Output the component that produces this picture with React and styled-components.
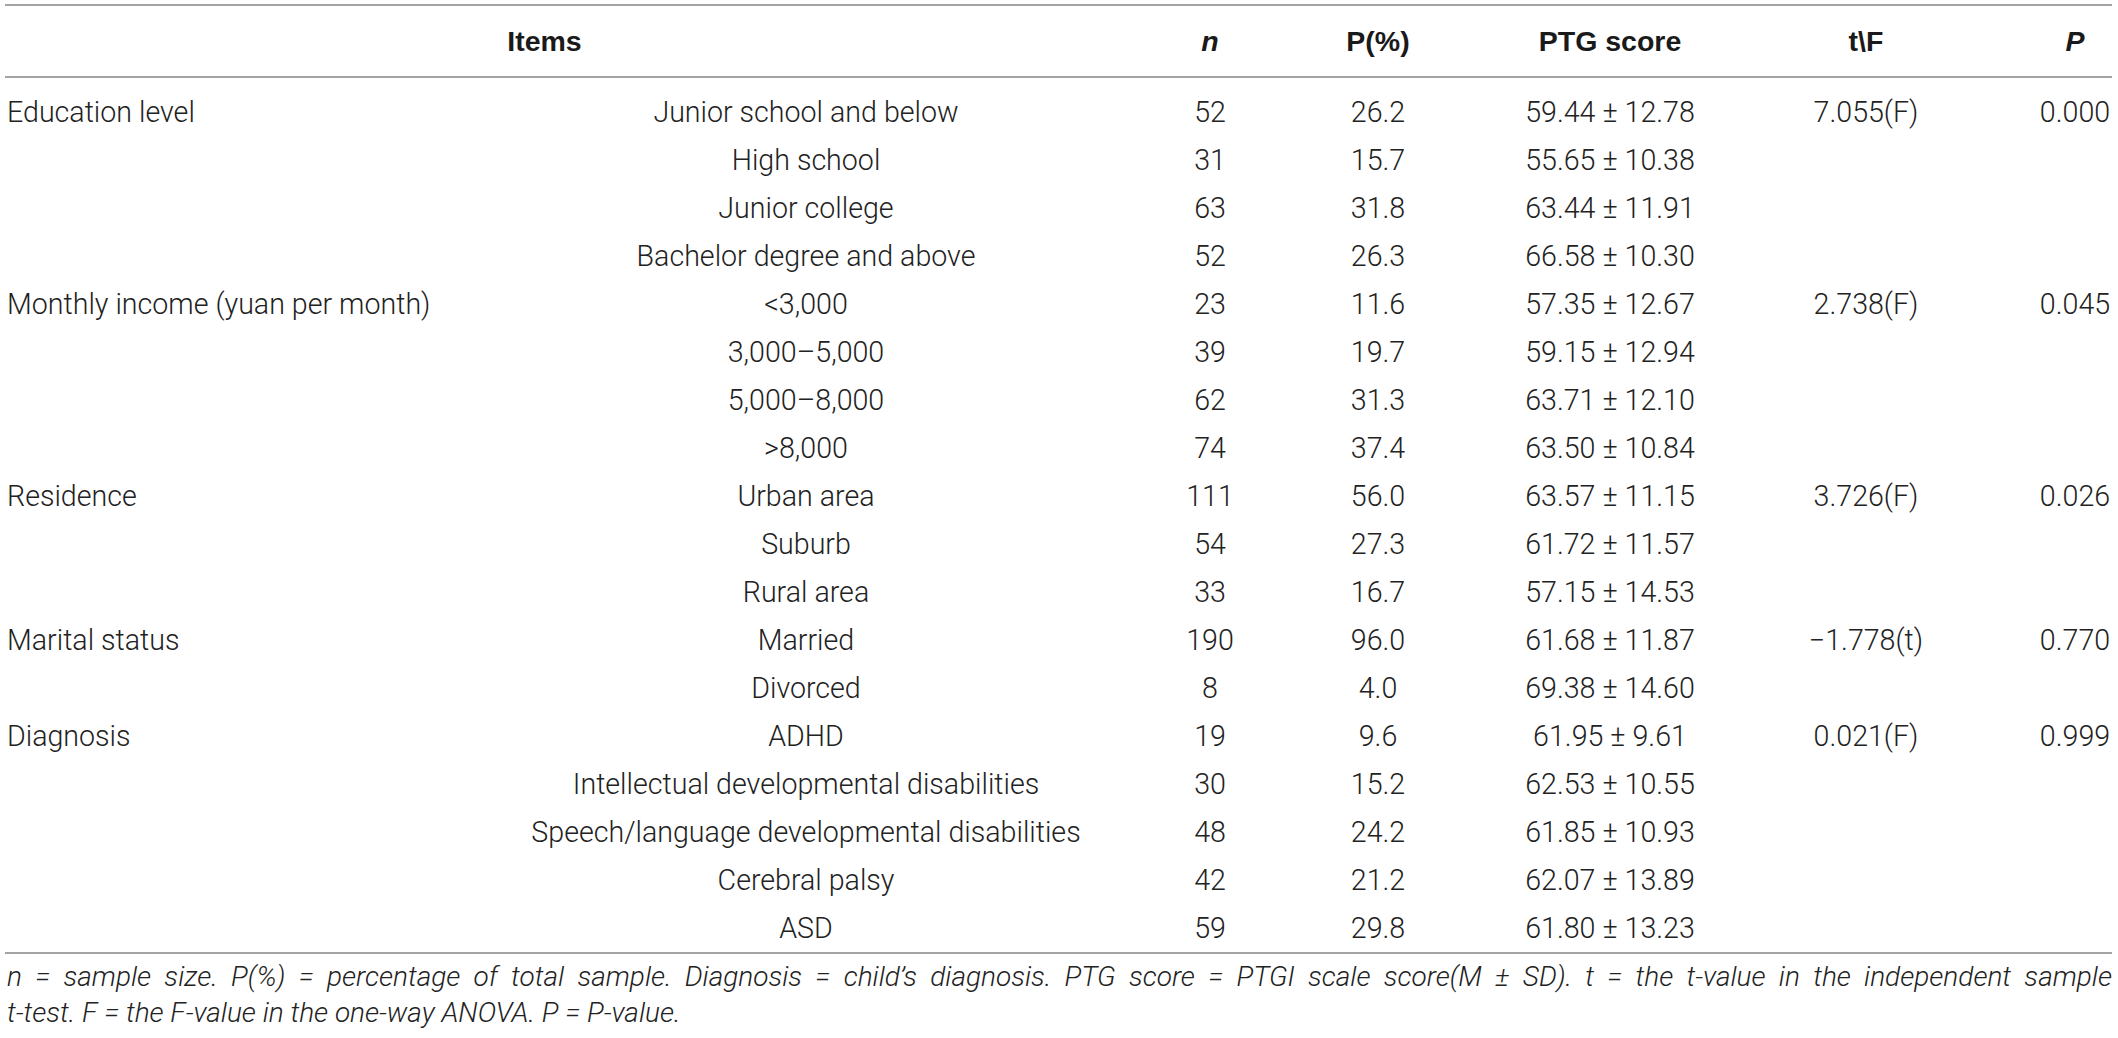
import styled, { createGlobalStyle } from "styled-components";

const GlobalStyle = createGlobalStyle`
  html, body {
    margin: 0;
    padding: 0;
    background: #fff;
  }
  body {
    font-family: Roboto, "Liberation Sans", sans-serif;
    color: #222;
  }
`;

const groups = [
  {
    name: "Education level",
    stat: "7.055(F)",
    sig: "0.000",
    items: [
      ["Junior school and below", "52", "26.2", "59.44 ± 12.78"],
      ["High school", "31", "15.7", "55.65 ± 10.38"],
      ["Junior college", "63", "31.8", "63.44 ± 11.91"],
      ["Bachelor degree and above", "52", "26.3", "66.58 ± 10.30"],
    ],
  },
  {
    name: "Monthly income (yuan per month)",
    stat: "2.738(F)",
    sig: "0.045",
    items: [
      ["<3,000", "23", "11.6", "57.35 ± 12.67"],
      ["3,000–5,000", "39", "19.7", "59.15 ± 12.94"],
      ["5,000–8,000", "62", "31.3", "63.71 ± 12.10"],
      [">8,000", "74", "37.4", "63.50 ± 10.84"],
    ],
  },
  {
    name: "Residence",
    stat: "3.726(F)",
    sig: "0.026",
    items: [
      ["Urban area", "111", "56.0", "63.57 ± 11.15"],
      ["Suburb", "54", "27.3", "61.72 ± 11.57"],
      ["Rural area", "33", "16.7", "57.15 ± 14.53"],
    ],
  },
  {
    name: "Marital status",
    stat: "−1.778(t)",
    sig: "0.770",
    items: [
      ["Married", "190", "96.0", "61.68 ± 11.87"],
      ["Divorced", "8", "4.0", "69.38 ± 14.60"],
    ],
  },
  {
    name: "Diagnosis",
    stat: "0.021(F)",
    sig: "0.999",
    items: [
      ["ADHD", "19", "9.6", "61.95 ± 9.61"],
      ["Intellectual developmental disabilities", "30", "15.2", "62.53 ± 10.55"],
      ["Speech/language developmental disabilities", "48", "24.2", "61.85 ± 10.93"],
      ["Cerebral palsy", "42", "21.2", "62.07 ± 13.89"],
      ["ASD", "59", "29.8", "61.80 ± 13.23"],
    ],
  },
];

// column tracks measured off the reference
const COLS = "523px 556px 252px 84px 380px 132px 180px";
const LINE = "#a3a3a3";

export default function App() {
  return (
    <Wrap>
      <GlobalStyle />
      <Table>
        <Head>
          <HeadCell>Items</HeadCell>
          <HeadCell $italic>n</HeadCell>
          <HeadCell>P(%)</HeadCell>
          <HeadCell>PTG score</HeadCell>
          <HeadCell>t\F</HeadCell>
          <HeadCell $italic $pad={106}>P</HeadCell>
        </Head>
        <Body>
          {groups.map((g) =>
            g.items.map((it, i) => (
              <Row key={g.name + it[0]}>
                <Cell $align="left" $pad={2}>{i === 0 ? g.name : ""}</Cell>
                <Cell>{it[0]}</Cell>
                <Cell>{it[1]}</Cell>
                <Cell>{it[2]}</Cell>
                <Cell>{it[3]}</Cell>
                <Cell>{i === 0 ? g.stat : ""}</Cell>
                <Cell $pad={106}>{i === 0 ? g.sig : ""}</Cell>
              </Row>
            ))
          )}
        </Body>
      </Table>
      <Note>
        <NoteLine $justify>
          n = sample size. P(%) = percentage of total sample. Diagnosis = child’s diagnosis. PTG score = PTGI scale
          score(M ± SD). t = the t-value in the independent sample
        </NoteLine>
        <NoteLine>t-test. F = the F-value in the one-way ANOVA. P = P-value.</NoteLine>
      </Note>
    </Wrap>
  );
}

const Wrap = styled.div`
  width: 2107px;
  margin-left: 5px;
`;

const Table = styled.div`
  margin-top: 4px;
  border-top: 2px solid ${LINE};
  border-bottom: 2px solid ${LINE};
`;

const Head = styled.div`
  display: grid;
  grid-template-columns: 1079px 252px 84px 380px 132px 180px;
  align-items: center;
  height: 70px;
  border-bottom: 2px solid ${LINE};
  font-family: "Liberation Sans", Arial, sans-serif;
  font-weight: 700;
  font-size: 28.5px;
  color: #1a1a1a;
`;

const HeadCell = styled.div`
  text-align: center;
  white-space: nowrap;
  font-style: ${(p) => (p.$italic ? "italic" : "normal")};
  padding-left: ${(p) => p.$pad || 0}px;
`;

const Body = styled.div`
  padding-top: 10px;
`;

const Row = styled.div`
  display: grid;
  grid-template-columns: ${COLS};
  align-items: center;
  height: 48px;
  font-size: 28.6px;
  font-weight: 300;
`;

const Cell = styled.div`
  text-align: ${(p) => p.$align || "center"};
  white-space: nowrap;
  padding-left: ${(p) => p.$pad || 0}px;
`;

const Note = styled.div`
  margin-top: 5px;
  padding-left: 2px;
  font-size: 28px;
  font-style: italic;
  font-weight: 300;
  line-height: 36px;
  color: #222;
`;

const NoteLine = styled.div`
  white-space: nowrap;
  text-align: ${(p) => (p.$justify ? "justify" : "left")};
  text-align-last: ${(p) => (p.$justify ? "justify" : "left")};
  ${(p) => p.$justify && "white-space: normal;"}
`;
